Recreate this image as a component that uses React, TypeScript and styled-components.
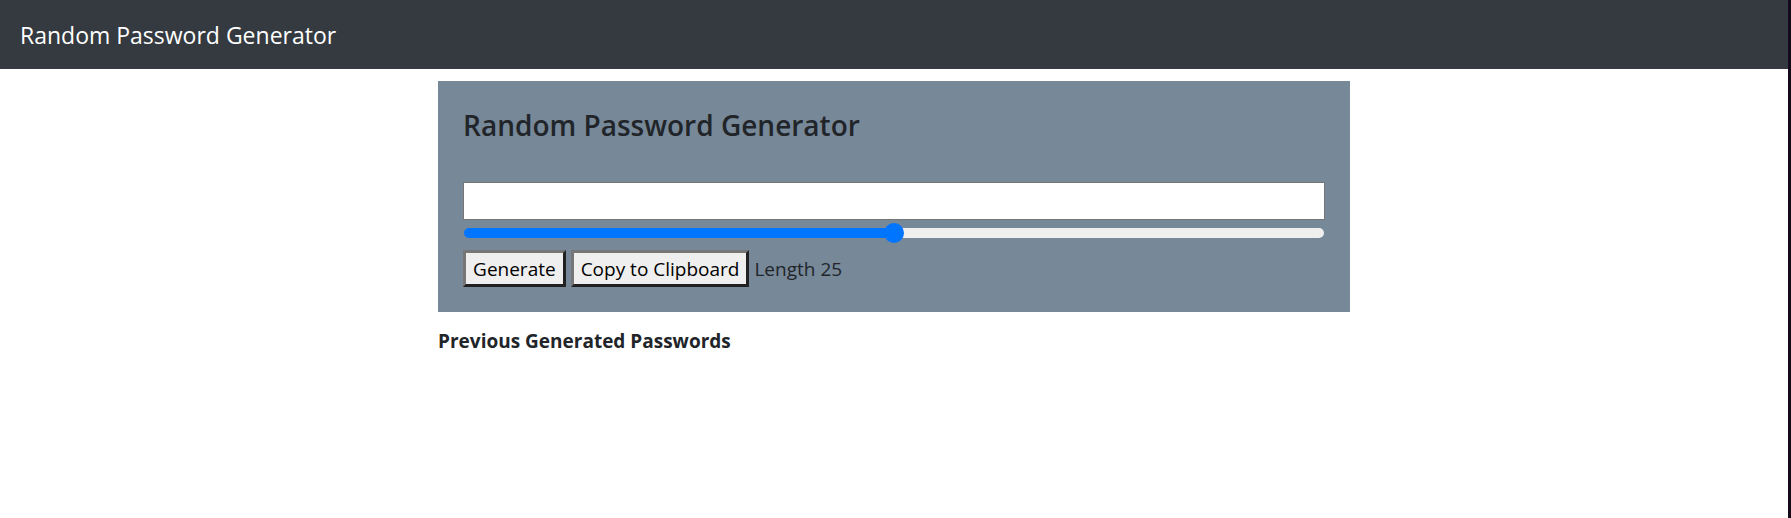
import React, { useState } from "react";
import styled, { createGlobalStyle } from "styled-components";

const GlobalStyle = createGlobalStyle`
  *, *::before, *::after { box-sizing: border-box; }
  body {
    margin: 0;
    background: #fff;
    color: #212529;
    font-family: "Open Sans", "Noto Sans", sans-serif;
    font-size: 19px;
    line-height: 30px;
  }
`;

const Page = styled.div`
  min-height: 100vh;
  border-right: 3px solid #140a1c;
`;

const Navbar = styled.nav`
  display: flex;
  align-items: center;
  padding: 16px 20px 14px;
  background: #343a40;
`;

const Brand = styled.a`
  color: #fff;
  font-size: 23px;
  line-height: 39px;
  text-decoration: none;
`;

const Main = styled.main`
  width: 51%;
  margin: 12px auto 0;
`;

const Panel = styled.section`
  display: flex;
  flex-direction: column;
  padding: 25px;
  background: #778899;
`;

const Title = styled.h1`
  margin: 0 0 37px;
  font-size: 28px;
  font-weight: 600;
  line-height: 39px;
`;

const PasswordField = styled.input`
  width: 100%;
  height: 38px;
  padding: 1px 3px;
  border: 1px solid #767676;
  border-radius: 0;
  background: #fff;
  font: inherit;
`;

const Slider = styled.input<{ $percent: number }>`
  appearance: none;
  width: 100%;
  height: 20px;
  margin: 3px 0 7px;
  background: transparent;

  &::-webkit-slider-runnable-track {
    height: 10px;
    margin: 0 1px;
    border-radius: 5px;
    background: linear-gradient(
      to right,
      #0075ff ${(p) => p.$percent}%,
      #efefef ${(p) => p.$percent}%
    );
  }

  &::-webkit-slider-thumb {
    appearance: none;
    width: 20px;
    height: 20px;
    margin-top: -5px;
    border-radius: 50%;
    background: #0075ff;
  }
`;

const Actions = styled.div`
  display: flex;
  align-items: center;
  gap: 5px;
`;

const Button = styled.button`
  height: 37px;
  padding: 0 7px;
  border: 3px solid;
  border-color: #767676 #212121 #212121 #767676;
  border-radius: 0;
  background: #efefef;
  color: #000;
  font: inherit;
`;

const History = styled.h2`
  margin: 14px 0 0;
  font-size: 19px;
  font-weight: 700;
  line-height: 30px;
`;

export default function App() {
  const max = 50;
  const [length, setLength] = useState(25);
  const [password, setPassword] = useState("");

  const generate = () => {
    const chars = "ABCDEFGHIJKLMNOPQRSTUVWXYZabcdefghijklmnopqrstuvwxyz0123456789!@#$%&*";
    const values = crypto.getRandomValues(new Uint32Array(length));
    setPassword(Array.from(values, (v) => chars[v % chars.length]).join(""));
  };

  return (
    <Page>
      <GlobalStyle />
      <Navbar>
        <Brand href="#">Random Password Generator</Brand>
      </Navbar>
      <Main>
        <Panel>
          <Title>Random Password Generator</Title>
          <PasswordField type="text" aria-label="Password" value={password} readOnly />
          <Slider
            id="length"
            type="range"
            min={0}
            max={max}
            value={length}
            $percent={(length / max) * 100}
            onChange={(e) => setLength(Number(e.target.value))}
          />
          <Actions>
            <Button type="button" onClick={generate}>Generate</Button>
            <Button type="button" onClick={() => navigator.clipboard?.writeText(password)}>
              Copy to Clipboard
            </Button>
            <label htmlFor="length">Length {length}</label>
          </Actions>
        </Panel>
        <History>Previous Generated Passwords</History>
      </Main>
    </Page>
  );
}
